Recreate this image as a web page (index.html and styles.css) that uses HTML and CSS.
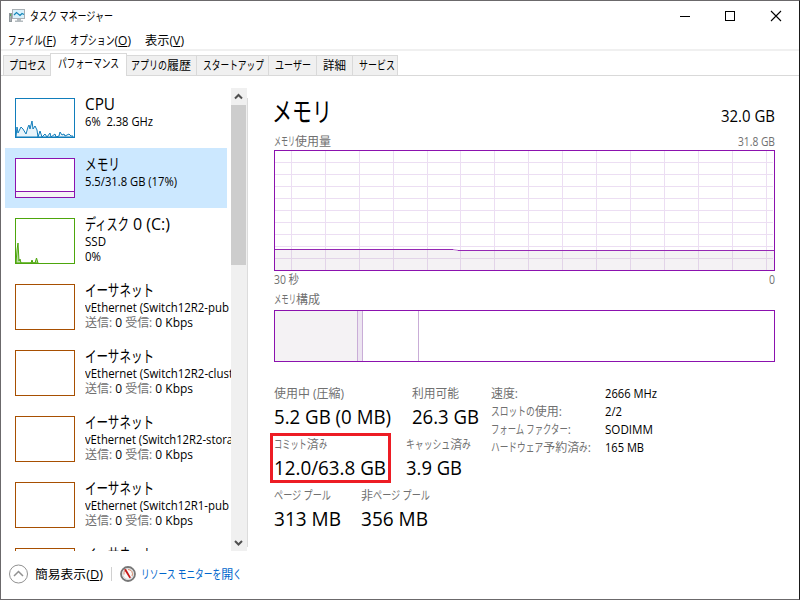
FILE: index.html
```html
<!DOCTYPE html>
<html lang="ja">
<head>
  <meta charset="utf-8">
  <title>タスク マネージャー</title>
  <link rel="stylesheet" href="styles.css">
</head>
<body>
  <div class="window">
    <div class="titlebar">
      <svg class="app-icon" width="17" height="16" viewBox="0 0 17 16">
        <rect x="0.500" y="5.500" width="2" height="8" fill="#a9afb3" stroke="#8f979c"/>
        <rect x="1" y="6" width="1" height="2" fill="#4fae55"/>
        <rect x="3.500" y="1.500" width="12" height="9" fill="#d9f1fb" stroke="#a9b0b5"/>
        <path d="M5 7l2.500-2.500 3.500 3 2-2 2 1" fill="none" stroke="#1485b8" stroke-width="1.200"/>
        <path d="M8 11h4v1.500h2V14H6v-1.500h2z" fill="#b4bbbf"/>
      </svg>
      <span class="text" data-w="83">タスク マネージャー</span>
      <svg class="controls" width="110" height="20" viewBox="0 0 110 20">
        <g fill="none" stroke="#000" shape-rendering="crispEdges">
          <path d="M0 10.500h10"/>
          <rect x="45.500" y="5.500" width="9" height="9"/>
        </g>
        <path d="M91 5l10 10M101 5l-10 10" fill="none" stroke="#000" stroke-width="1.100"/>
      </svg>
    </div>

    <div class="menu">
      <span class="text" data-w="48">ファイル(<u>F</u>)</span>
      <span class="text" data-w="61">オプション(<u>O</u>)</span>
      <span class="text" data-w="39">表示(<u>V</u>)</span>
    </div>

    <div class="tabs">
      <div class="tab tab-process"><span class="text" data-w="37">プロセス</span></div>
      <div class="tab tab-performance active"><span class="text" data-w="61">パフォーマンス</span></div>
      <div class="tab tab-history"><span class="text" data-w="60">アプリの履歴</span></div>
      <div class="tab tab-startup"><span class="text" data-w="61">スタートアップ</span></div>
      <div class="tab tab-users"><span class="text" data-w="36">ユーザー</span></div>
      <div class="tab tab-details"><span class="text" data-w="23">詳細</span></div>
      <div class="tab tab-services"><span class="text" data-w="36">サービス</span></div>
    </div>

    <div class="content">
      <div class="sidebar">
        <div class="list">
          <div class="item cpu">
            <svg class="thumb" width="60" height="40" viewBox="0 0 60 40">
              <path d="M1 39L2 29 3 35 6 29 8 31 11 36 13 29 14 27 15 31 17 23 18 31 20 28 22 32 23 39 25 33 27 39 30 36 32 39 35 35 36 39 40 36 41 39 44 38 45 34 47 37 49 36 50 38 54 36 56 38 58 38V39z" fill="#e9f4fa" stroke="#117dbb"/>
              <rect x="0.500" y="0.500" width="59" height="39"/>
            </svg>
            <div class="info">
              <div class="name"><span class="text" data-w="30">CPU</span></div>
              <div><span class="text" data-w="68">6%&nbsp; 2.38 GHz</span></div>
            </div>
          </div>
          <div class="item memory selected">
            <svg class="thumb" width="60" height="40" viewBox="0 0 60 40">
              <rect x="0.500" y="0.500" width="59" height="39"/>
              <path d="M1 33.500h58V39H1z" fill="#f4f2f4"/>
              <path d="M1 33.500h58M0 39.500h60" stroke="#8b12ae"/>
            </svg>
            <div class="info">
              <div class="name"><span class="text" data-w="35">メモリ</span></div>
              <div><span class="text" data-w="92">5.5/31.8 GB (17%)</span></div>
            </div>
          </div>
          <div class="item disk">
            <svg class="thumb" width="60" height="46" viewBox="0 0 60 46">
              <path d="M1 45L2 32 3 25 4 43 5 41 6 45 16 45 17 42 18 45 20 45 21.500 40 23 45z" fill="#b9dca4" stroke="#4da60c"/>
              <rect x="0.500" y="0.500" width="59" height="45"/>
            </svg>
            <div class="info">
              <div class="name"><span class="text" data-w="85">ディスク 0 (C:)</span></div>
              <div><span class="text" data-w="21">SSD</span></div>
              <div><span class="text" data-w="16">0%</span></div>
            </div>
          </div>
          <div class="item ethernet">
            <svg class="thumb" width="60" height="46" viewBox="0 0 60 46"><rect x="0.500" y="0.500" width="59" height="45"/></svg>
            <div class="info">
              <div class="name"><span class="text" data-w="69">イーサネット</span></div>
              <div><span class="text" data-w="144">vEthernet (Switch12R2-pub</span></div>
              <div class="rate"><span class="text" data-w="108"><i>送信:</i> 0 <i>受信:</i> 0 Kbps</span></div>
            </div>
          </div>
          <div class="item ethernet">
            <svg class="thumb" width="60" height="46" viewBox="0 0 60 46"><rect x="0.500" y="0.500" width="59" height="45"/></svg>
            <div class="info">
              <div class="name"><span class="text" data-w="69">イーサネット</span></div>
              <div><span class="text" data-w="148">vEthernet (Switch12R2-clust</span></div>
              <div class="rate"><span class="text" data-w="108"><i>送信:</i> 0 <i>受信:</i> 0 Kbps</span></div>
            </div>
          </div>
          <div class="item ethernet">
            <svg class="thumb" width="60" height="46" viewBox="0 0 60 46"><rect x="0.500" y="0.500" width="59" height="45"/></svg>
            <div class="info">
              <div class="name"><span class="text" data-w="69">イーサネット</span></div>
              <div><span class="text" data-w="148">vEthernet (Switch12R2-stora</span></div>
              <div class="rate"><span class="text" data-w="108"><i>送信:</i> 0 <i>受信:</i> 0 Kbps</span></div>
            </div>
          </div>
          <div class="item ethernet">
            <svg class="thumb" width="60" height="46" viewBox="0 0 60 46"><rect x="0.500" y="0.500" width="59" height="45"/></svg>
            <div class="info">
              <div class="name"><span class="text" data-w="69">イーサネット</span></div>
              <div><span class="text" data-w="144">vEthernet (Switch12R1-pub</span></div>
              <div class="rate"><span class="text" data-w="108"><i>送信:</i> 0 <i>受信:</i> 0 Kbps</span></div>
            </div>
          </div>
          <div class="item ethernet">
            <svg class="thumb" width="60" height="46" viewBox="0 0 60 46"><rect x="0.500" y="0.500" width="59" height="45"/></svg>
            <div class="info">
              <div class="name"><span class="text" data-w="69">イーサネット</span></div>
            </div>
          </div>
        </div>
        <div class="scrollbar">
          <svg width="16" height="17" viewBox="0 0 16 17"><path d="M4 10.500l3.500-3.500 3.500 3.500" fill="none" stroke="#505050" stroke-width="2"/></svg>
          <div class="scroll-thumb"></div>
          <svg class="down" width="16" height="17" viewBox="0 0 16 17"><path d="M4 7l3.500 3.500L11 7" fill="none" stroke="#505050" stroke-width="2"/></svg>
        </div>
        <div class="divider"></div>
      </div>

      <div class="detail">
        <div class="heading">
          <h1><span class="text" data-w="60">メモリ</span></h1>
          <span class="text total" data-w="54">32.0 GB</span>
        </div>
        <div class="caption">
          <span class="text" data-w="57">メモリ使用量</span>
          <span class="text" data-w="37">31.8 GB</span>
        </div>
        <svg class="usage" width="501" height="121" viewBox="0 0 501 121" shape-rendering="crispEdges">
          <path d="M1 99h182l2 1h315v20H1z" fill="#f4f2f4"/>
          <path d="M17.500 1v119M51.500 1v119M85.500 1v119M119.500 1v119M153.500 1v119M186.500 1v119M220.500 1v119M254.500 1v119M288.500 1v119M322.500 1v119M356.500 1v119M390.500 1v119M424.500 1v119M458.500 1v119M492.500 1v119" stroke="#ecdef3"/>
          <path d="M1 12.500h498M1 24.500h498M1 36.500h498M1 48.500h498M1 60.500h498M1 72.500h498M1 84.500h498M1 96.500h498M1 108.500h498" stroke="#ecdef3"/>
          <path d="M17.500 100v20M51.500 100v20M85.500 100v20M119.500 100v20M153.500 100v20M186.500 101v19M220.500 101v19M254.500 101v19M288.500 101v19M322.500 101v19M356.500 101v19M390.500 101v19M424.500 101v19M458.500 101v19M492.500 101v19M1 108.500h498" stroke="#e2d4e8"/>
          <path d="M1 99.500h179M183 100.500h317" stroke="#9528b4"/>
          <path d="M179 99.500l5 1" stroke="#c58bd7" shape-rendering="auto"/>
          <rect x="0.500" y="0.500" width="500" height="120" fill="none" stroke="#8b12ae"/>
        </svg>
        <div class="caption axis">
          <span class="text" data-w="25">30 秒</span>
          <span class="text" data-w="6">0</span>
        </div>
        <div class="caption composition-label"><span class="text" data-w="46">メモリ構成</span></div>
        <svg class="composition" width="501" height="52" viewBox="0 0 501 52" shape-rendering="crispEdges">
          <rect x="1" y="1" width="82" height="50" fill="#f4f2f4"/>
          <rect x="84" y="1" width="4" height="50" fill="#ede5f1"/>
          <path d="M83.500 1v50M88.500 1v50M144.500 1v50" stroke="#c9add7"/>
          <rect x="0.500" y="0.500" width="500" height="51" fill="none" stroke="#8b12ae"/>
        </svg>

        <div class="stats">
          <div class="counters">
            <div class="row">
              <div class="stat in-use"><label><span class="text" data-w="70">使用中 (圧縮)</span></label><span class="text" data-w="117">5.2 GB (0 MB)</span></div>
              <div class="stat"><label><span class="text" data-w="47">利用可能</span></label><span class="text" data-w="67">26.3 GB</span></div>
            </div>
            <div class="row">
              <div class="stat committed"><label><span class="text" data-w="53">コミット済み</span></label><span class="text" data-w="112">12.0/63.8 GB</span></div>
              <div class="stat"><label><span class="text" data-w="65">キャッシュ済み</span></label><span class="text" data-w="56">3.9 GB</span></div>
            </div>
            <div class="row">
              <div class="stat paged"><label><span class="text" data-w="57">ページ プール</span></label><span class="text" data-w="67">313 MB</span></div>
              <div class="stat"><label><span class="text" data-w="69">非ページ プール</span></label><span class="text" data-w="67">356 MB</span></div>
            </div>
          </div>
          <dl class="hardware">
            <dt><span class="text" data-w="27">速度:</span></dt><dd><span class="text" data-w="52">2666 MHz</span></dd>
            <dt><span class="text" data-w="71">スロットの使用:</span></dt><dd><span class="text" data-w="17">2/2</span></dd>
            <dt><span class="text" data-w="80">フォーム ファクター:</span></dt><dd><span class="text" data-w="48">SODIMM</span></dd>
            <dt><span class="text" data-w="100">ハードウェア予約済み:</span></dt><dd><span class="text" data-w="39">165 MB</span></dd>
          </dl>
        </div>
      </div>
    </div>

    <div class="footer">
      <svg width="20" height="20" viewBox="0 0 20 20">
        <circle cx="9.500" cy="10" r="9" fill="#fff" stroke="#919191"/>
        <path d="M5 12l4.500-4.500L14 12" fill="none" stroke="#919191" stroke-width="1.500"/>
      </svg>
      <span class="text fewer" data-w="68">簡易表示(<u>D</u>)</span>
      <span class="separator"></span>
      <svg class="gauge" width="16" height="16" viewBox="0 0 16 16">
        <circle cx="8" cy="8" r="7" fill="#fafafa" stroke="#777" stroke-width="1.800"/>
        <circle cx="8" cy="8" r="5.300" fill="none" stroke="#d5d5d5"/>
        <path d="M4 8.500A4 4 0 0 1 5 5M8 3.500a4.500 4.500 0 0 1 4 6.500" fill="none" stroke="#d88b6c"/>
        <path d="M4 3.500l2-.5 5 8.500-1.500.8z" fill="#c51818"/>
      </svg>
      <a class="text" data-w="101">リソース モニターを開く</a>
    </div>
  </div>

  <script src="script.js"></script>
</body>
</html>
```
FILE: styles.css
```css
*, *::after {
  box-sizing: border-box;
}
body {
  margin: 0;
  width: 800px;
  height: 600px;
  overflow: hidden;
  background: #fff;
  color: #000;
  font: 12px "Open Sans", "Noto Sans CJK JP", sans-serif;
}
.window {
  display: flex;
  flex-direction: column;
  width: 800px;
  height: 600px;
  border: 1px solid #6b696b;
  border-right-color: #1a1a1a;
}
svg {
  display: block;
  flex: none;
}
.text {
  display: inline-block;
  white-space: nowrap;
  transform-origin: 0 50%;
  flex: none;
}
.kana {
  display: inline-block;
  white-space: pre;
  transform-origin: 0 50%;
}
u {
  text-underline-offset: 1px;
}

/* title, menu */
.titlebar {
  display: flex;
  align-items: center;
  height: 29px;
  padding-left: 8px;
}
.app-icon {
  margin-right: 4px;
}
.controls {
  margin-left: auto;
  margin-right: 9px;
}
.menu {
  display: flex;
  gap: 14px;
  height: 21px;
  padding-left: 7px;
  border-bottom: 2px solid #f0f0f0;
  line-height: 22px;
}

/* tabs */
.tabs {
  display: flex;
  align-items: flex-end;
  height: 25px;
  padding-left: 2px;
  background: linear-gradient(#d9d9d9, #d9d9d9) bottom / 100% 1px no-repeat;
}
.tab {
  height: 21px;
  line-height: 20px;
  background: #f0f0f0;
  border: 1px solid #d9d9d9;
  border-left: 0;
  padding-left: 6px;
}
.tab.active {
  height: 23px;
  line-height: 20px;
  background: #fff;
  border-left: 1px solid #d9d9d9;
  border-bottom: 0;
}
.tab-process {
  width: 47px;
  padding-left: 5px;
  border-left: 1px solid #d9d9d9;
  border-right: 0;
}
.tab-performance {
  width: 77px;
  padding-left: 7px;
}
.tab-history {
  width: 70px;
  padding-left: 4px;
}
.tab-startup {
  width: 72px;
}
.tab-users {
  width: 48px;
}
.tab-details {
  width: 36px;
}
.tab-services {
  width: 45px;
}

/* device list */
.content {
  display: flex;
  height: 475px;
  padding-top: 12px;
}
.sidebar {
  display: flex;
  width: 247px;
  height: 463px;
  padding-left: 4px;
}
.list {
  width: 226px;
  overflow: hidden;
}
.item {
  display: flex;
  width: 222px;
  height: 66px;
  padding-left: 10px;
}
.cpu, .memory {
  height: 60px;
}
.selected {
  background: #cce8ff;
}
.thumb {
  margin-top: 10px;
  background: #fff;
}
.thumb rect {
  fill: none;
  stroke: #a74f01;
}
.cpu .thumb rect {
  stroke: #117dbb;
}
.memory .thumb rect {
  stroke: #8b12ae;
}
.disk .thumb rect {
  stroke: #4da60c;
}
.info {
  padding: 6px 0 0 10px;
  line-height: 15px;
}
.info > div {
  height: 15px;
}
.info .name {
  font-size: 16px;
  line-height: 20px;
  height: 20px;
}
.rate i {
  color: #707070;
  font-style: normal;
}
.scrollbar {
  display: flex;
  flex-direction: column;
  width: 16px;
  background: #f0f0f0;
}
.scroll-thumb {
  width: 15px;
  height: 160px;
  background: #cdcdcd;
}
.scrollbar .down {
  margin-top: auto;
}
.divider {
  width: 1px;
  height: 449px;
  margin-top: 10px;
  background: #dcdcdc;
}

/* memory details */
.detail {
  width: 501px;
  margin-left: 26px;
}
.heading {
  display: flex;
  justify-content: space-between;
  height: 45px;
}
h1 {
  margin: 6px 0 0 -2px;
  font-size: 27px;
  font-weight: normal;
  line-height: 36px;
}
.total {
  font-size: 16px;
  line-height: 20px;
  margin-top: 18px;
}
.caption {
  display: flex;
  justify-content: space-between;
  height: 17px;
  line-height: 17px;
  color: #707070;
}
.axis {
  height: 19px;
  line-height: 18px;
}
.composition-label {
  height: 20px;
  line-height: 19px;
}
.stats {
  display: flex;
  padding-top: 23px;
}
.counters {
  width: 217px;
}
.row {
  display: flex;
  height: 51px;
}
.stat {
  font-size: 20px;
  line-height: 28px;
}
.stat label {
  display: block;
  height: 18px;
  font-size: 12px;
  line-height: 18px;
  color: #707070;
}
.in-use {
  width: 138px;
}
.committed {
  position: relative;
  width: 132px;
}
/* highlight frame over the committed value */
.committed::after {
  content: "";
  position: absolute;
  left: -4px;
  top: -3px;
  width: 121px;
  height: 50px;
  border: 3px solid #ed1c24;
}
.paged {
  width: 87px;
}
.hardware {
  display: grid;
  grid-template-columns: 114px auto;
  grid-auto-rows: 18px;
  margin: 0;
  line-height: 18px;
}
.hardware dt {
  color: #707070;
}
.hardware dd {
  margin: 0;
}

/* footer */
.footer {
  display: flex;
  align-items: center;
  height: 46px;
  padding-left: 8px;
}
.fewer {
  margin-left: 6px;
}
.separator {
  width: 1px;
  height: 14px;
  margin: 0 8px;
  background: #d0d0d0;
}
.gauge {
  margin-right: 5px;
}
.footer a {
  color: #0066cc;
}
```
FILE: script.js
```js
// UI labels use condensed kana: squeeze the kana runs so each label
// takes its own width, or the whole label when it has no kana.
const kanaRun = /([\u3040-\u30ff]+(?: [\u3040-\u30ff]+)*)/;

function squeeze(el, natural, width) {
  el.style.transform = `scaleX(${width / natural})`;
  el.style.marginRight = `${width - natural}px`;
}

document.querySelectorAll(".text").forEach(label => {
  const width = Number(label.dataset.w);

  [...label.childNodes].forEach(node => {
    if (node.nodeType !== Node.TEXT_NODE || !kanaRun.test(node.data)) return;
    const parts = node.data.split(kanaRun).filter(Boolean).map(part => {
      if (!kanaRun.test(part)) return part;
      const span = document.createElement("span");
      span.className = "kana";
      span.textContent = part;
      return span;
    });
    node.replaceWith(...parts);
  });

  const natural = label.getBoundingClientRect().width;
  const runs = [...label.querySelectorAll(".kana")];
  if (!runs.length) {
    squeeze(label, natural, width);
    return;
  }
  const widths = runs.map(run => run.getBoundingClientRect().width);
  const kana = widths.reduce((a, b) => a + b, 0);
  const ratio = (width - (natural - kana)) / kana;
  runs.forEach((run, i) => squeeze(run, widths[i], widths[i] * ratio));
});
```
